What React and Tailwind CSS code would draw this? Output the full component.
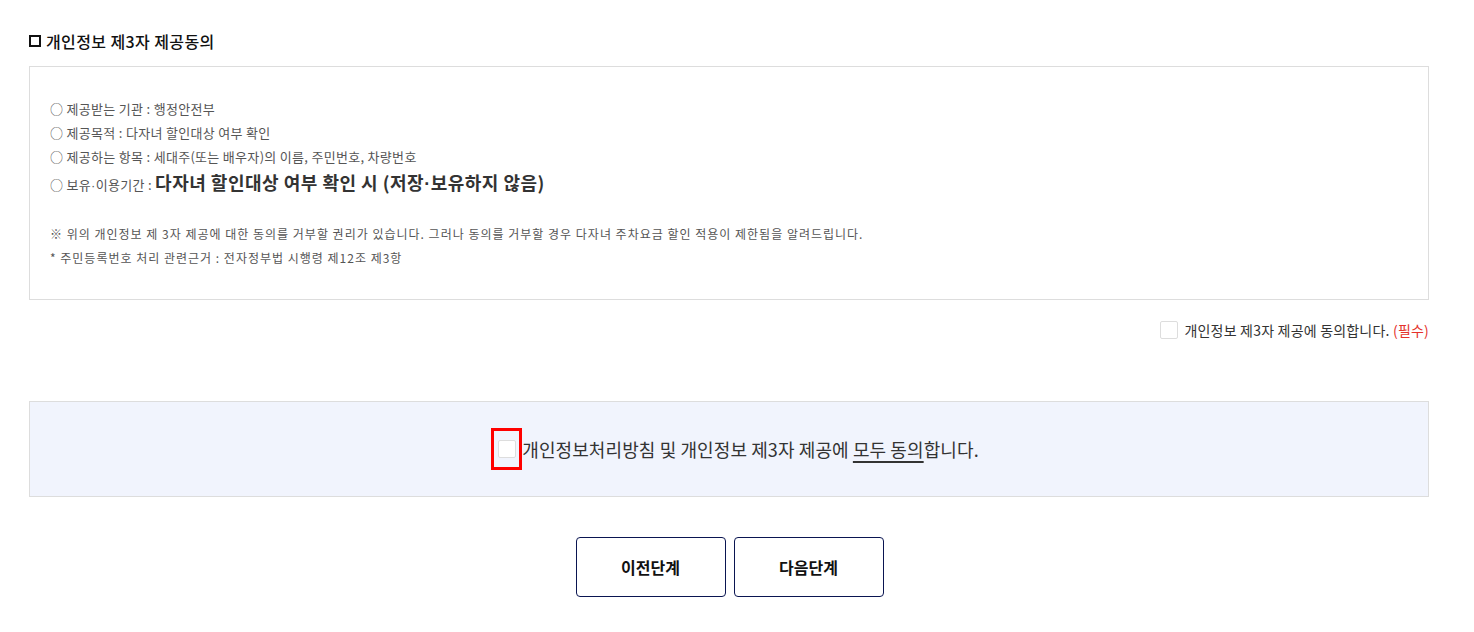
import React, { useState } from 'react';

const font = { fontFamily: '"Noto Sans CJK KR", "Noto Sans", sans-serif' };
const dot = { fontFamily: '"Liberation Sans", sans-serif' };

const items = [
  { label: '제공받는 기관', value: '행정안전부' },
  { label: '제공목적', value: '다자녀 할인대상 여부 확인' },
  { label: '제공하는 항목', value: '세대주(또는 배우자)의 이름, 주민번호, 차량번호' },
];

const ThirdPartyConsent = () => {
  const [agreeThird, setAgreeThird] = useState(false);
  const [agreeAll, setAgreeAll] = useState(false);

  return (
    <div className="min-h-screen bg-white px-[29px] pt-[29px] text-[#333]" style={font}>
      <div className="w-[1400px]">
        {/* Title */}
        <h3 className="flex items-center gap-[5px] text-[16px] font-medium leading-[24px] tracking-[0.4px] text-[#111]">
          <span className="inline-block h-[12px] w-[12px] border-2 border-[#111]" />
          개인정보 제3자 제공동의
        </h3>

        {/* Content box */}
        <div className="mt-[13px] border border-[#ddd] pl-[20px] pt-[30px] pb-[29px] text-[13px] tracking-[0.3px] text-[#555]">
          {items.map((item) => (
            <p key={item.label} className="leading-[24px]">
              ○ {item.label} : {item.value}
            </p>
          ))}
          <p className="flex items-baseline leading-[26px]">
            <span>
              ○ 보유<span style={dot}>·</span>이용기간 :&nbsp;
            </span>
            <span className="text-[18px] font-bold tracking-[0.5px] text-[#333]">
              다자녀 할인대상 여부 확인 시 (저장<span style={dot}>·</span>보유하지 않음)
            </span>
          </p>
          <p className="mt-[23px] text-[12px] leading-[24px] tracking-[1px]">
            ※ 위의 개인정보 제 3자 제공에 대한 동의를 거부할 권리가 있습니다. 그러나 동의를 거부할 경우 다자녀 주차요금 할인 적용이 제한됨을 알려드립니다.
          </p>
          <p className="text-[12px] leading-[24px] tracking-[1px]">
            * 주민등록번호 처리 관련근거 : 전자정부법 시행령 제12조 제3항
          </p>
        </div>

        {/* Single agreement */}
        <div className="mt-[19px] flex justify-end">
          <label className="flex cursor-pointer items-center gap-[6px] text-[14px] leading-[22px] tracking-[0.2px]">
            <span
              onClick={() => setAgreeThird(!agreeThird)}
              className={`inline-block h-[18px] w-[18px] rounded-[2px] border border-[#ddd] ${agreeThird ? 'bg-[#0a1551]' : 'bg-white'}`}
            />
            <span>
              개인정보 제3자 제공에 동의합니다. <span className="text-[#e4322b]">(필수)</span>
            </span>
          </label>
        </div>

        {/* All agreement */}
        <div className="mt-[60px] flex h-[96px] items-center justify-center border border-[#ddd] bg-[#f1f4fd] pl-[12px]">
          <label className="flex cursor-pointer items-center text-[18px] tracking-[0.1px] text-[#333]">
            <span className="flex h-[42px] w-[31px] items-center justify-center border-[3px] border-[#ff0000]">
              <span
                onClick={() => setAgreeAll(!agreeAll)}
                className={`inline-block h-[18px] w-[18px] rounded-[2px] border border-[#ddd] ${agreeAll ? 'bg-[#0a1551]' : 'bg-white'}`}
              />
            </span>
            <span>
              개인정보처리방침 및 개인정보 제3자 제공에{' '}
              <span className="underline decoration-2 underline-offset-4">모두 동의</span>합니다.
            </span>
          </label>
        </div>

        {/* Buttons */}
        <div className="mt-[40px] flex justify-center gap-[8px] pl-[1px]">
          <button className="h-[60px] w-[150px] rounded-[4px] border border-[#0a1551] bg-white text-[16px] font-semibold text-[#111]">
            이전단계
          </button>
          <button className="h-[60px] w-[150px] rounded-[4px] border border-[#0a1551] bg-white text-[16px] font-semibold text-[#111]">
            다음단계
          </button>
        </div>
      </div>
    </div>
  );
};

export default ThirdPartyConsent;
